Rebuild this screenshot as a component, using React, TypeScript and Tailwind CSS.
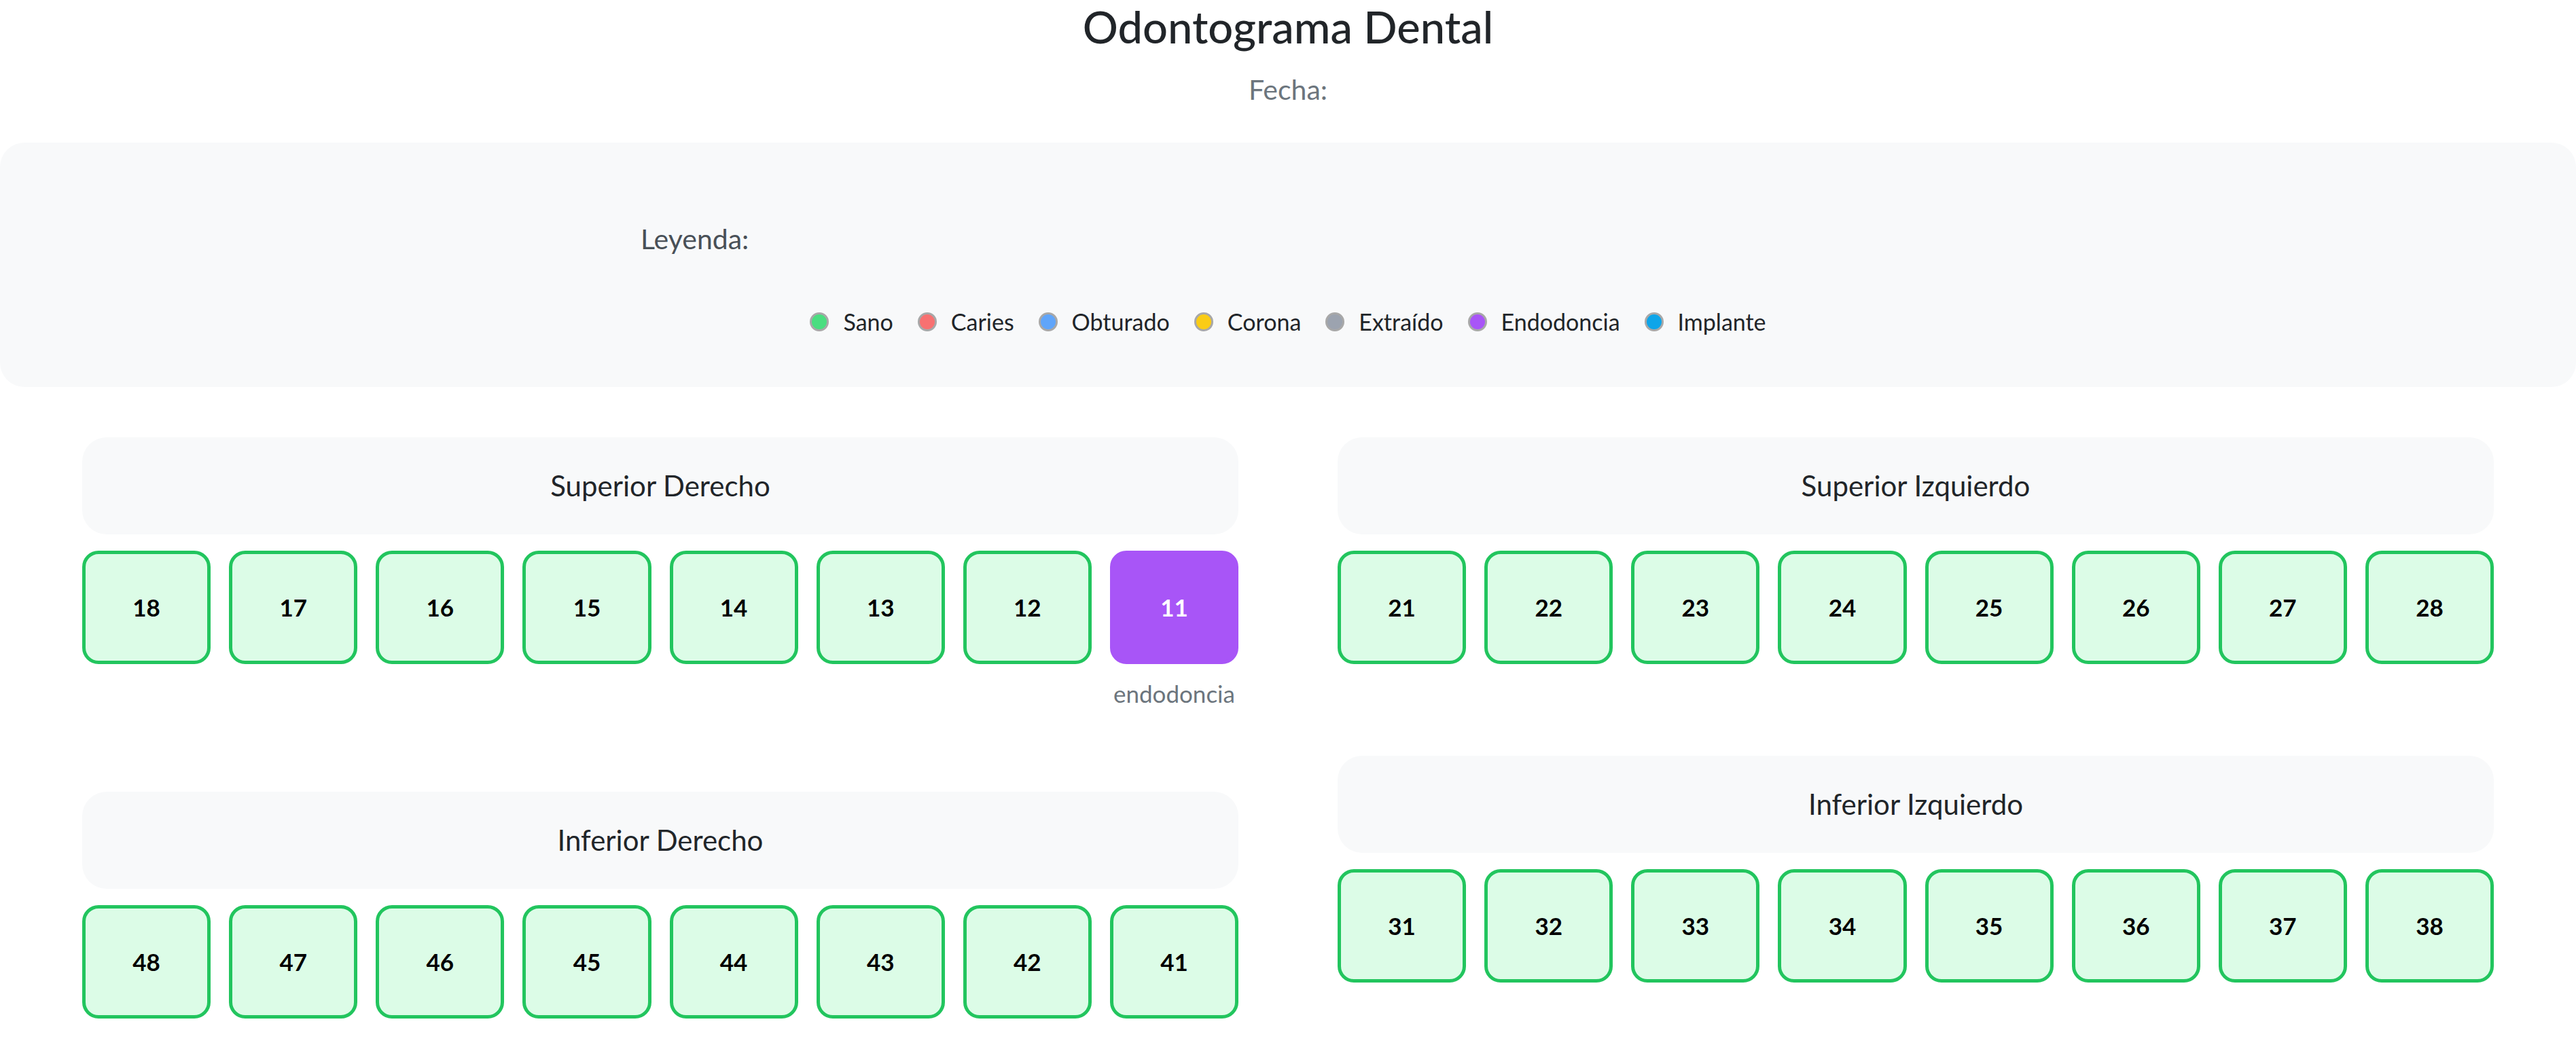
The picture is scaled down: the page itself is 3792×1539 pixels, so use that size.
import React from "react";

type Tooth = { n: number; state?: "endo" };

const legend = [
  { label: "Sano", color: "bg-[#4ade80]" },
  { label: "Caries", color: "bg-[#f87171]" },
  { label: "Obturado", color: "bg-[#60a5fa]" },
  { label: "Corona", color: "bg-[#facc15]" },
  { label: "Extraído", color: "bg-[#9ca3af]" },
  { label: "Endodoncia", color: "bg-[#a855f7]" },
  { label: "Implante", color: "bg-[#0ea5e9]" },
];

function ToothCell({ t }: { t: Tooth }) {
  const endo = t.state === "endo";
  return (
    <div className="flex flex-col items-center">
      <div
        className={
          endo
            ? "flex h-[167px] w-full items-center justify-center rounded-[24px] border-[5px] border-[#a855f7] bg-[#a855f7] text-[35px] font-bold text-white"
            : "flex h-[167px] w-full items-center justify-center rounded-[24px] border-[5px] border-[#22c55e] bg-[#dcfce7] text-[35px] font-bold text-black"
        }
      >
        {t.n}
      </div>
      {endo && (
        <div className="mt-[26px] text-[35px] leading-[34px] text-[#6c757d]">endodoncia</div>
      )}
    </div>
  );
}

function Quadrant({ name, teeth }: { name: string; teeth: Tooth[] }) {
  return (
    <div>
      <div className="flex h-[143px] items-center justify-center rounded-[36px] bg-[#f8f9fa] text-[42px] text-[#212529]">
        {name}
      </div>
      <div className="mt-[24px] grid grid-cols-8 items-start gap-[27px]">
        {teeth.map((t) => (
          <ToothCell key={t.n} t={t} />
        ))}
      </div>
    </div>
  );
}

export default function App() {
  const sd: Tooth[] = [18, 17, 16, 15, 14, 13, 12].map((n) => ({ n }));
  sd.push({ n: 11, state: "endo" });
  const si: Tooth[] = [21, 22, 23, 24, 25, 26, 27, 28].map((n) => ({ n }));
  const id: Tooth[] = [48, 47, 46, 45, 44, 43, 42, 41].map((n) => ({ n }));
  const ii: Tooth[] = [31, 32, 33, 34, 35, 36, 37, 38].map((n) => ({ n }));

  return (
    <div className="min-h-screen w-full bg-white font-['Lato','Noto_Sans',sans-serif] text-[#212529]">
      <h1 className="text-center text-[65px] font-medium leading-[1.2] text-[#212529]">
        Odontograma Dental
      </h1>
      <p className="mt-[30px] text-center text-[41px] leading-[48px] text-[#6c757d]">Fecha:</p>

      <div className="mt-[54px] rounded-[36px] bg-[#f8f9fa] pb-[76px] pt-[118px]">
        <div className="pl-[943px] text-[41px] leading-[48px] text-[#495057]">Leyenda:</div>
        <div className="mt-[77px] flex items-center justify-center gap-[36px] text-[34px] leading-[41px] text-[#212529]">
          {legend.map((l) => (
            <div key={l.label} className="flex items-center gap-[21px]">
              <span className={`inline-block h-[28px] w-[28px] rounded-full border-[3px] border-[#a8a8a8] ${l.color}`} />
              <span>{l.label}</span>
            </div>
          ))}
        </div>
      </div>

      <div className="mt-[74px] flex items-start gap-[146px] px-[121px]">
        <div className="flex flex-1 flex-col gap-[128px]">
          <Quadrant name="Superior Derecho" teeth={sd} />
          <Quadrant name="Inferior Derecho" teeth={id} />
        </div>
        <div className="flex flex-1 flex-col gap-[135px]">
          <Quadrant name="Superior Izquierdo" teeth={si} />
          <Quadrant name="Inferior Izquierdo" teeth={ii} />
        </div>
      </div>
    </div>
  );
}
